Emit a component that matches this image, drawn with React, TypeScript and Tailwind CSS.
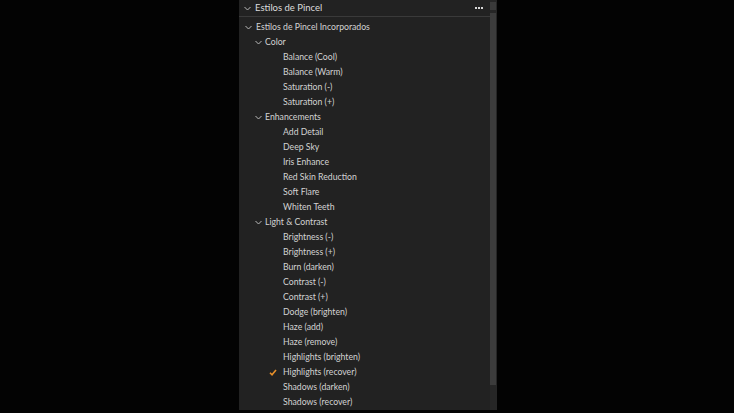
import React from "react";

const Chevron = () => (
  <svg width="7" height="5" viewBox="0 0 7 5" className="shrink-0">
    <path d="M0.5 1 L3.5 4 L6.5 1" fill="none" stroke="#b8b8b8" strokeWidth="1" />
  </svg>
);

const Check = () => (
  <svg width="8" height="7" viewBox="0 0 8 7" className="shrink-0">
    <path d="M1 3.8 L3 5.8 L7 1" fill="none" stroke="#e8902a" strokeWidth="1.6" />
  </svg>
);

const groups: { name: string; items: string[] }[] = [
  { name: "Color", items: ["Balance (Cool)", "Balance (Warm)", "Saturation (-)", "Saturation (+)"] },
  {
    name: "Enhancements",
    items: ["Add Detail", "Deep Sky", "Iris Enhance", "Red Skin Reduction", "Soft Flare", "Whiten Teeth"],
  },
  {
    name: "Light & Contrast",
    items: [
      "Brightness (-)",
      "Brightness (+)",
      "Burn (darken)",
      "Contrast (-)",
      "Contrast (+)",
      "Dodge (brighten)",
      "Haze (add)",
      "Haze (remove)",
      "Highlights (brighten)",
      "Highlights (recover)",
      "Shadows (darken)",
      "Shadows (recover)",
    ],
  },
];

export default function App() {
  return (
    <div
      className="w-[734px] h-[413px] bg-[#030303] overflow-hidden pl-[239px]"
      style={{ fontFamily: 'Lato, "Noto Sans", sans-serif' }}
    >
      <div className="w-[258px] h-[410px] bg-[#222222] flex">
        <div className="flex-1 flex flex-col min-w-0">
          <div className="h-[18px] flex items-center border-b border-[#3a3a3a] pl-[5px] pr-[6px] gap-[4px]">
            <Chevron />
            <span className="text-[9.5px] text-[#dcdcdc] leading-none">Estilos de Pincel</span>
            <span className="ml-auto flex gap-[1px] pr-[1px]">
              <span className="w-[2px] h-[2px] bg-[#d8d8d8]" />
              <span className="w-[2px] h-[2px] bg-[#d8d8d8]" />
              <span className="w-[2px] h-[2px] bg-[#d8d8d8]" />
            </span>
          </div>
          <div className="pt-[3px] flex flex-col">
            <div className="h-[15px] flex items-center pl-[6px] gap-[4px]">
              <Chevron />
              <span className="text-[8.7px] text-[#d2d2d2] leading-none">Estilos de Pincel Incorporados</span>
            </div>
            {groups.map((g) => (
              <React.Fragment key={g.name}>
                <div className="h-[15px] flex items-center pl-[16px] gap-[3px]">
                  <Chevron />
                  <span className="text-[8.7px] text-[#d2d2d2] leading-none">{g.name}</span>
                </div>
                {g.items.map((it) => (
                  <div key={it} className="h-[15px] flex items-center pl-[30px]">
                    <span className="w-[14px] flex items-center">
                      {it === "Highlights (recover)" ? <Check /> : null}
                    </span>
                    <span className="text-[8.7px] text-[#d2d2d2] leading-none">{it}</span>
                  </div>
                ))}
              </React.Fragment>
            ))}
          </div>
        </div>
        <div className="w-[7px] bg-[#262626] flex flex-col pt-[2px]">
          <div className="h-[8px] w-[6px] bg-[#3a3a3a] mb-[3px]" />
          <div className="h-[372px] w-[6px] bg-[#3c3c3c]" />
        </div>
      </div>
    </div>
  );
}
